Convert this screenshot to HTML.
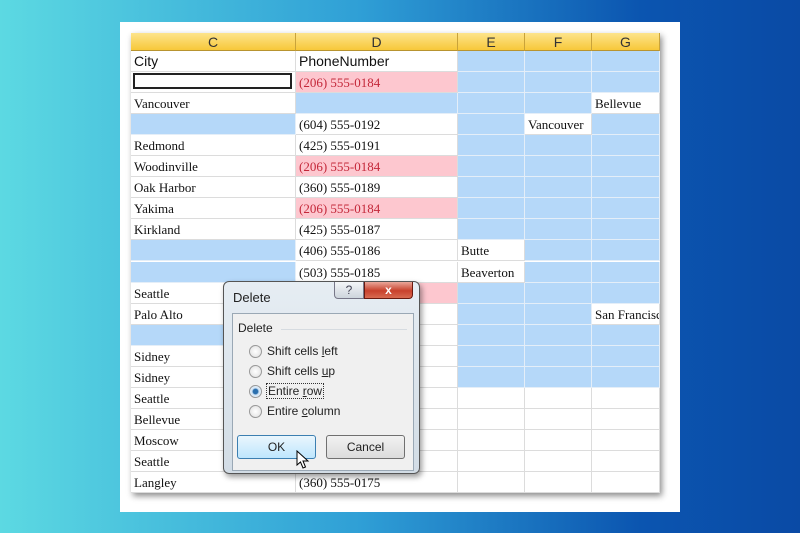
<!DOCTYPE html><html><head><style>
*{margin:0;padding:0;box-sizing:border-box}
body{width:800px;height:533px;overflow:hidden;background:linear-gradient(90deg,#5cd9e2 0%,#2f9fd6 45%,#0b55b0 80%,#0a4aa5 100%);position:relative;font-family:"Liberation Serif",serif}
.panel{position:absolute;left:120px;top:22px;width:560px;height:490px;background:#fff}
.sheet{position:absolute;left:131px;top:33px;width:529px;height:460px;background:#fff;box-shadow:2px 3px 6px rgba(0,0,0,.45)}
.hd{position:absolute;top:0;height:18px;background:linear-gradient(#fde48c,#f7c83a);border-right:1px solid #c9a33a;border-bottom:1px solid #b89430;font:14px "Liberation Sans",sans-serif;color:#333;text-align:center;line-height:18px}
.c{position:absolute;height:21px;border-right:1px solid #dcdcdc;border-bottom:1px solid #dcdcdc;font-size:13px;line-height:22px;padding-left:3px;color:#111;white-space:nowrap;overflow:hidden}
.b{background:#b5d8f9;border-color:#e4eef8}
.p{background:#fdc7cf;color:#c4283a}
.dlg{position:absolute;left:223px;top:281px;width:197px;height:193px;border:1px solid #555;border-radius:6px;background:linear-gradient(#e6edf3,#d2dce5);box-shadow:2px 3px 6px rgba(0,0,0,.4);font-family:"Liberation Sans",sans-serif;font-size:12px;color:#222}
.in{position:absolute;left:8px;top:31px;width:182px;height:158px;background:#f0f0f0;border:1px solid #9aa8b5}
.rad{position:absolute;left:16px;width:13px;height:13px;border-radius:50%;border:1px solid #999;background:radial-gradient(#fff,#ddd)}
.lb{position:absolute;left:34px}
.btn{position:absolute;top:121px;width:79px;height:24px;border:1px solid #707070;border-radius:3px;background:linear-gradient(#f2f2f2,#dcdcdc);text-align:center;line-height:22px}
</style></head><body>
<div class="panel"></div>
<div class="sheet">
<div class="hd" style="left:0;width:165px">C</div>
<div class="hd" style="left:165px;width:162px">D</div>
<div class="hd" style="left:327px;width:67px">E</div>
<div class="hd" style="left:394px;width:67px">F</div>
<div class="hd" style="left:461px;width:68px">G</div>
<div id="g"></div>
</div>
<script>
var X=[0,165,327,394,461,529];
var R=[
["c:City","c:PhoneNumber","b","b","b"],
["sel","p:(206) 555-0184","b","b","b"],
["c:Vancouver","b","b","b","c:Bellevue"],
["b","c:(604) 555-0192","b","c:Vancouver","b"],
["c:Redmond","c:(425) 555-0191","b","b","b"],
["c:Woodinville","p:(206) 555-0184","b","b","b"],
["c:Oak Harbor","c:(360) 555-0189","b","b","b"],
["c:Yakima","p:(206) 555-0184","b","b","b"],
["c:Kirkland","c:(425) 555-0187","b","b","b"],
["b","c:(406) 555-0186","c:Butte","b","b"],
["b","c:(503) 555-0185","c:Beaverton","b","b"],
["c:Seattle","p:","b","b","b"],
["c:Palo Alto","c:","b","b","c:San Francisco"],
["b","c:","b","b","b"],
["c:Sidney","c:","b","b","b"],
["c:Sidney","c:","b","b","b"],
["c:Seattle","c:","c:","c:","c:"],
["c:Bellevue","c:","c:","c:","c:"],
["c:Moscow","c:","c:","c:","c:"],
["c:Seattle","c:","c:","c:","c:"],
["c:Langley","c:(360) 555-0175","c:","c:","c:"]];
var h="";
R.forEach(function(r,i){var t=18+i*21.05;r.forEach(function(v,j){var k=v.split(":")[0],s=v.substr(k.length+1);var cl="c";if(k=="b")cl+=" b";if(k=="p")cl+=" p";
var st="left:"+X[j]+"px;top:"+t+"px;width:"+(X[j+1]-X[j])+"px;";
if(i==0)st+="font-family:'Liberation Sans',sans-serif;font-size:14px;line-height:20px;";
if(k=="sel")h+='<div class="c" style="'+st+'"><div style="position:absolute;left:2px;top:1px;right:3px;bottom:3px;border:2px solid #222"></div></div>';
else h+='<div class="'+cl+'" style="'+st+'">'+(s||"")+'</div>';});});
document.getElementById("g").innerHTML=h;
</script>
<div class="dlg">
<div style="position:absolute;left:9px;top:8px;font-size:13px">Delete</div>
<div style="position:absolute;left:110px;top:0;width:30px;height:17px;border:1px solid #778;border-top:none;border-radius:0 0 0 4px;background:linear-gradient(#f4f6f8,#cdd5dc);text-align:center;font-size:12px;line-height:16px;color:#445">?</div>
<div style="position:absolute;left:140px;top:0;width:49px;height:17px;border:1px solid #6a1a10;border-top:none;border-radius:0 0 4px 0;background:linear-gradient(#e9a79a,#c8412c 55%,#d86a50);text-align:center;font-size:12px;font-weight:bold;line-height:16px;color:#fff">x</div>
<div class="in">
<div style="position:absolute;left:5px;top:7px">Delete</div>
<div style="position:absolute;left:48px;top:15px;width:126px;height:1px;background:#d6dbe0"></div>
<div class="rad" style="top:31px"></div><div class="lb" style="top:30px">Shift cells <u>l</u>eft</div>
<div class="rad" style="top:51px"></div><div class="lb" style="top:50px">Shift cells <u>u</u>p</div>
<div class="rad" style="top:71px;background:radial-gradient(#2a6fae 30%,#cfe3f5 45%,#fff)"></div><div class="lb" style="top:69px;border:1px dotted #333;padding:0 1px;left:33px">Entire <u>r</u>ow</div>
<div class="rad" style="top:91px"></div><div class="lb" style="top:90px">Entire <u>c</u>olumn</div>
<div class="btn" style="left:4px;border-color:#3c7fb1;background:linear-gradient(#eaf6fd,#bee6fd)">OK</div>
<div class="btn" style="left:93px">Cancel</div>
<svg style="position:absolute;left:63px;top:136px" width="14" height="20" viewBox="0 0 14 20"><path d="M1 1 L1 15 L4.5 12 L7 18 L9.5 17 L7 11 L12 11 Z" fill="#fff" stroke="#000" stroke-width="1"/></svg>
</div></div>
</body></html>
